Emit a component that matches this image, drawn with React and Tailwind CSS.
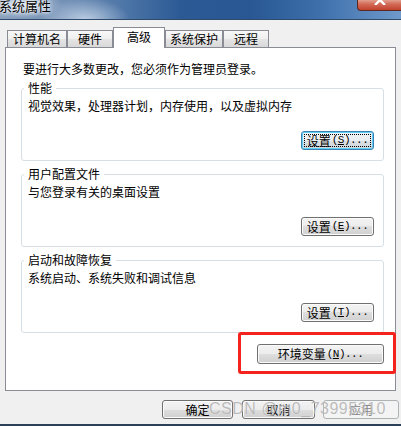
import React from "react";

function Acc({ k }) {
  return (
    <span className="font-['Liberation_Mono',monospace] text-[11px] tracking-[-0.5px] ml-[1px]">
      (<span className="underline">{k}</span>)...
    </span>
  );
}

const btnBase =
  "rounded-[3px] border flex items-center justify-center text-[12px] leading-none";
const btnNormal =
  "border-[#707070] bg-[linear-gradient(#f3f3f3_0%,#ececec_50%,#dedede_50%,#d0d0d0_100%)] shadow-[inset_0_0_0_1px_#fbfbfb]";

function Group({ legend, text, k, focus, className }) {
  return (
    <fieldset
      className={`ml-[15px] w-[363px] h-[80px] border border-[#d5dfe5] rounded-[3px] ${className}`}
    >
      <legend className="ml-[2px] px-[4px] h-[14px] leading-[14px] text-[12px]">
        {legend}
      </legend>
      <div className="pt-[3px] pl-[6px] leading-[16px]">{text}</div>
      <div className="mt-[17px] flex justify-end pr-[9px]">
        {focus ? (
          <div
            className={`${btnBase} w-[73px] h-[19px] p-[2px] border-[#3c7fb1] bg-[linear-gradient(#f1f4f6_0%,#e9edf0_50%,#dbe1e5_50%,#cfd6db_100%)] shadow-[inset_0_0_0_1px_#5fd0f5]`}
          >
            <span className="flex-1 self-stretch border border-dotted border-black flex items-center justify-center">
              设置<Acc k={k} />
            </span>
          </div>
        ) : (
          <div className={`${btnBase} ${btnNormal} w-[73px] h-[19px]`}>
            设置<Acc k={k} />
          </div>
        )}
      </div>
    </fieldset>
  );
}

function Tab({ label, w, selected }) {
  if (selected) {
    return (
      <div
        className={`${w} h-[21px] mb-[-1px] bg-white border-l border-t border-r border-[#898c95] flex items-center justify-center pb-[2px] text-[12px]`}
      >
        {label}
      </div>
    );
  }
  return (
    <div
      className={`${w} h-[17px] border-l border-t border-r border-[#898c95] bg-[linear-gradient(#f8f8f8_0%,#efefef_50%,#e5e5e5_50%,#d9d9d9_100%)] flex items-center justify-center text-[12px]`}
    >
      {label}
    </div>
  );
}

export default function App() {
  return (
    <div className="w-[401px] h-[426px] bg-[#f0f0f0] relative overflow-hidden flex flex-col font-['Noto_Sans_CJK_SC','Noto_Sans',sans-serif] text-[12px] text-black">
      {/* title bar */}
      <div className="h-[20px] shrink-0 border-b border-[#2f4b6b] relative bg-[radial-gradient(ellipse_45px_22px_at_85px_20px,rgba(215,228,244,0.75),transparent),radial-gradient(ellipse_40px_14px_at_22px_4px,rgba(225,232,242,0.8),transparent),linear-gradient(90deg,#8aa1be_0%,#7b96b8_12%,#4b74a6_32%,#2c5a95_45%,#285793_62%,#3f70ac_80%,#6e9acb_100%)]">
        <div className="text-[13px] leading-[13px] -mt-[1px] -ml-[1px] [text-shadow:0_0_5px_#fff,0_0_3px_#fff]">
          系统属性
        </div>
        <div className="absolute right-0 top-0 w-[44px] h-[11px] border-l border-b border-[#5b2922] rounded-bl-[4px] bg-[linear-gradient(#e3a08f_0%,#d26c58_40%,#c1412c_100%)] flex justify-center overflow-hidden">
          <svg width="12" height="10" viewBox="0 0 12 10" className="-mt-[5px]">
            <path d="M1 0 L11 10 M11 0 L1 10" stroke="#fff" strokeWidth="2.4" />
          </svg>
        </div>
      </div>

      {/* tabs */}
      <div className="flex items-end pl-[7px] mt-[7px] h-[20px] relative z-10">
        <Tab label="计算机名" w="w-[60px]" />
        <Tab label="硬件" w="w-[46px]" />
        <Tab label="高级" w="w-[52px]" selected />
        <Tab label="系统保护" w="w-[58px]" />
        <Tab label="远程" w="w-[46px]" />
      </div>

      {/* panel */}
      <div className="ml-[5px] w-[391px] h-[344px] shrink-0 bg-white border border-[#898c95] flex flex-col">
        <div className="pl-[17px] pt-[13px] leading-[16px]">
          要进行大多数更改，您必须作为管理员登录。
        </div>
        <Group
          className="mt-[4px]"
          legend="性能"
          text="视觉效果，处理器计划，内存使用，以及虚拟内存"
          k="S"
          focus
        />
        <Group
          className="mt-[6px]"
          legend="用户配置文件"
          text="与您登录有关的桌面设置"
          k="E"
        />
        <Group
          className="mt-[6px]"
          legend="启动和故障恢复"
          text="系统启动、系统失败和调试信息"
          k="T"
        />
        <div className="mt-[11px] flex justify-end pr-[11px]">
          <div className={`${btnBase} ${btnNormal} w-[127px] h-[20px]`}>
            环境变量<Acc k="N" />
          </div>
        </div>
      </div>

      {/* bottom buttons */}
      <div className="flex mt-[9px]">
        <div className={`${btnBase} ${btnNormal} ml-[162px] w-[71px] h-[19px]`}>确定</div>
        <div className={`${btnBase} ${btnNormal} ml-[9px] w-[73px] h-[19px]`}>取消</div>
        <div
          className={`${btnBase} ml-[8px] w-[76px] h-[19px] border-[#adb2b5] bg-[#f4f4f4] text-[#838383]`}
        >
          应用
        </div>
      </div>

      <div className="mt-auto h-[2px] bg-[#2c4157]" />

      {/* watermark */}
      <div className="absolute left-[209px] top-[400px] font-['Liberation_Sans',Arial,sans-serif] text-[16px] leading-[18px] tracking-[0.5px] text-[#a6a6a6]/75 [text-shadow:0_0_1px_rgba(255,255,255,0.7)] pointer-events-none">
        CSDN @m0_73995310
      </div>

      {/* annotation box */}
      <div className="absolute left-[238px] top-[332px] w-[158px] h-[42px] border-[3px] border-[#f5231d] rounded-[3px] pointer-events-none" />
    </div>
  );
}
